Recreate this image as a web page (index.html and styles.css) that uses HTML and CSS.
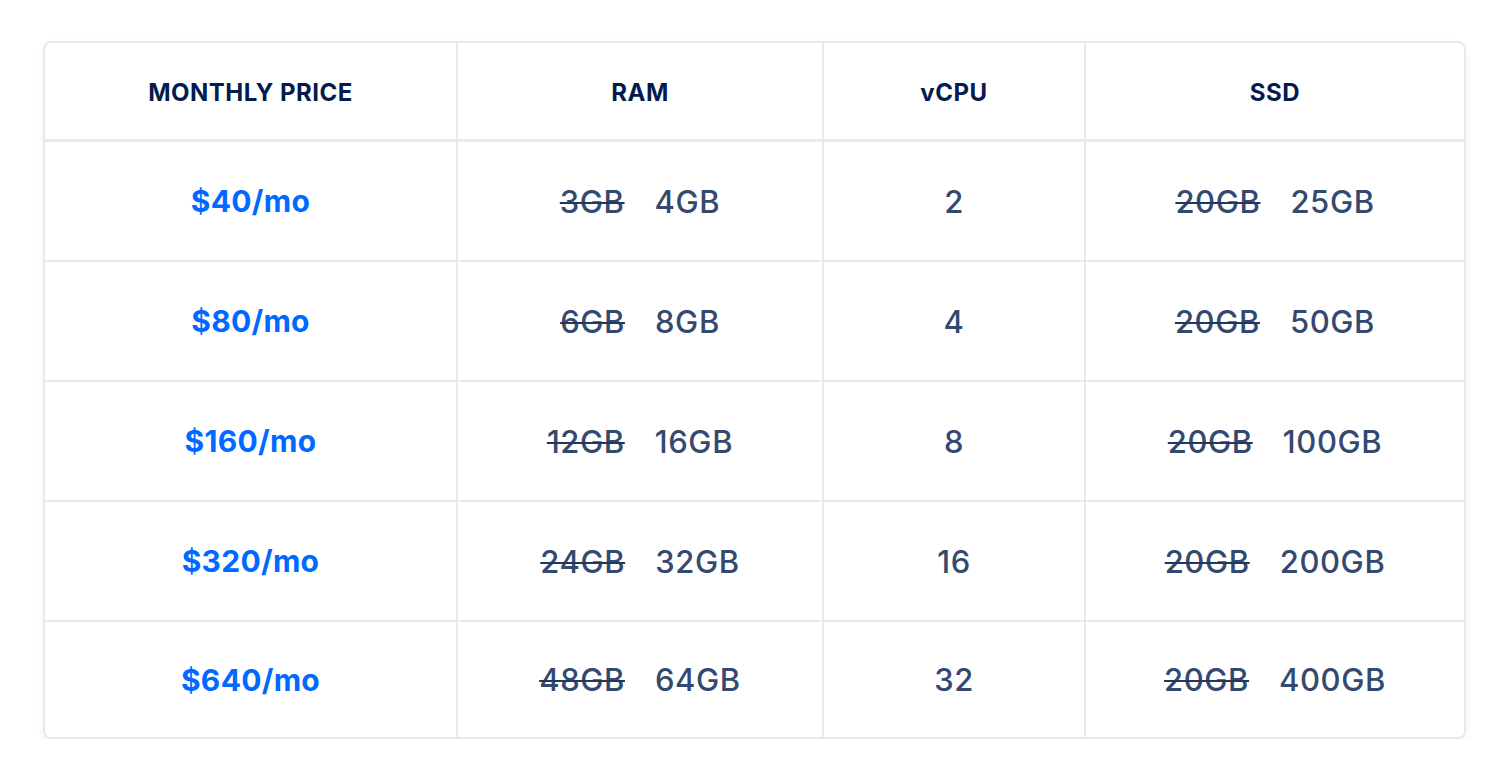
FILE: index.html
```html
<!DOCTYPE html>
<html lang="en">
<head>
<meta charset="utf-8">
<title>Pricing</title>
<link rel="stylesheet" href="styles.css">
</head>
<body>
<div class="page">
  <div class="card">
    <div class="grid">
      <div class="cell head">MONTHLY PRICE</div>
      <div class="cell head">RAM</div>
      <div class="cell head">vCPU</div>
      <div class="cell head last-col">SSD</div>

      <div class="cell price">$40/mo</div>
      <div class="cell data"><span class="old">3GB</span><span>4GB</span></div>
      <div class="cell data">2</div>
      <div class="cell data last-col"><span class="old">20GB</span><span>25GB</span></div>

      <div class="cell price">$80/mo</div>
      <div class="cell data"><span class="old">6GB</span><span>8GB</span></div>
      <div class="cell data">4</div>
      <div class="cell data last-col"><span class="old">20GB</span><span>50GB</span></div>

      <div class="cell price">$160/mo</div>
      <div class="cell data"><span class="old">12GB</span><span>16GB</span></div>
      <div class="cell data">8</div>
      <div class="cell data last-col"><span class="old">20GB</span><span>100GB</span></div>

      <div class="cell price">$320/mo</div>
      <div class="cell data"><span class="old">24GB</span><span>32GB</span></div>
      <div class="cell data">16</div>
      <div class="cell data last-col"><span class="old">20GB</span><span>200GB</span></div>

      <div class="cell price last-row">$640/mo</div>
      <div class="cell data last-row"><span class="old">48GB</span><span>64GB</span></div>
      <div class="cell data last-row">32</div>
      <div class="cell data last-row last-col"><span class="old">20GB</span><span>400GB</span></div>
    </div>
  </div>
</div>
</body>
</html>
```

FILE: styles.css
```css
* { box-sizing: border-box; }
html, body {
  margin: 0;
  padding: 0;
  background: #ffffff;
}
body {
  font-family: "Inter", "Liberation Sans", sans-serif;
}
.page {
  padding: 41px 0 0 43px;
}
.card {
  width: 1423px;
  border: 2px solid #e6e9ef;
  border-radius: 8px;
  background: #ffffff;
  box-shadow: 0 3px 8px rgba(3, 27, 78, 0.05);
  overflow: hidden;
}
.grid {
  display: grid;
  grid-template-columns: 413px 366px 262px 378px;
  grid-template-rows: 99px repeat(4, 120px) 115px;
}
.cell {
  display: flex;
  align-items: center;
  justify-content: center;
  border-right: 2px solid #e6e9ef;
  border-bottom: 2px solid #e6e9ef;
}
.last-col { border-right: none; }
.last-row { border-bottom: none; }
.head {
  border-bottom-width: 3px;
  font-weight: 700;
  font-size: 24px;
  color: #031b4e;
  letter-spacing: 0.5px;
  padding-top: 2px;
}
.price {
  font-weight: 700;
  font-size: 30px;
  color: #0069ff;
  letter-spacing: 0.3px;
}
.data {
  font-weight: 500;
  font-size: 31px;
  color: #34496f;
  letter-spacing: 0.6px;
  gap: 30px;
}
.old {
  text-decoration: line-through;
  text-decoration-thickness: 2px;
  text-decoration-color: #23365e;
}
```
